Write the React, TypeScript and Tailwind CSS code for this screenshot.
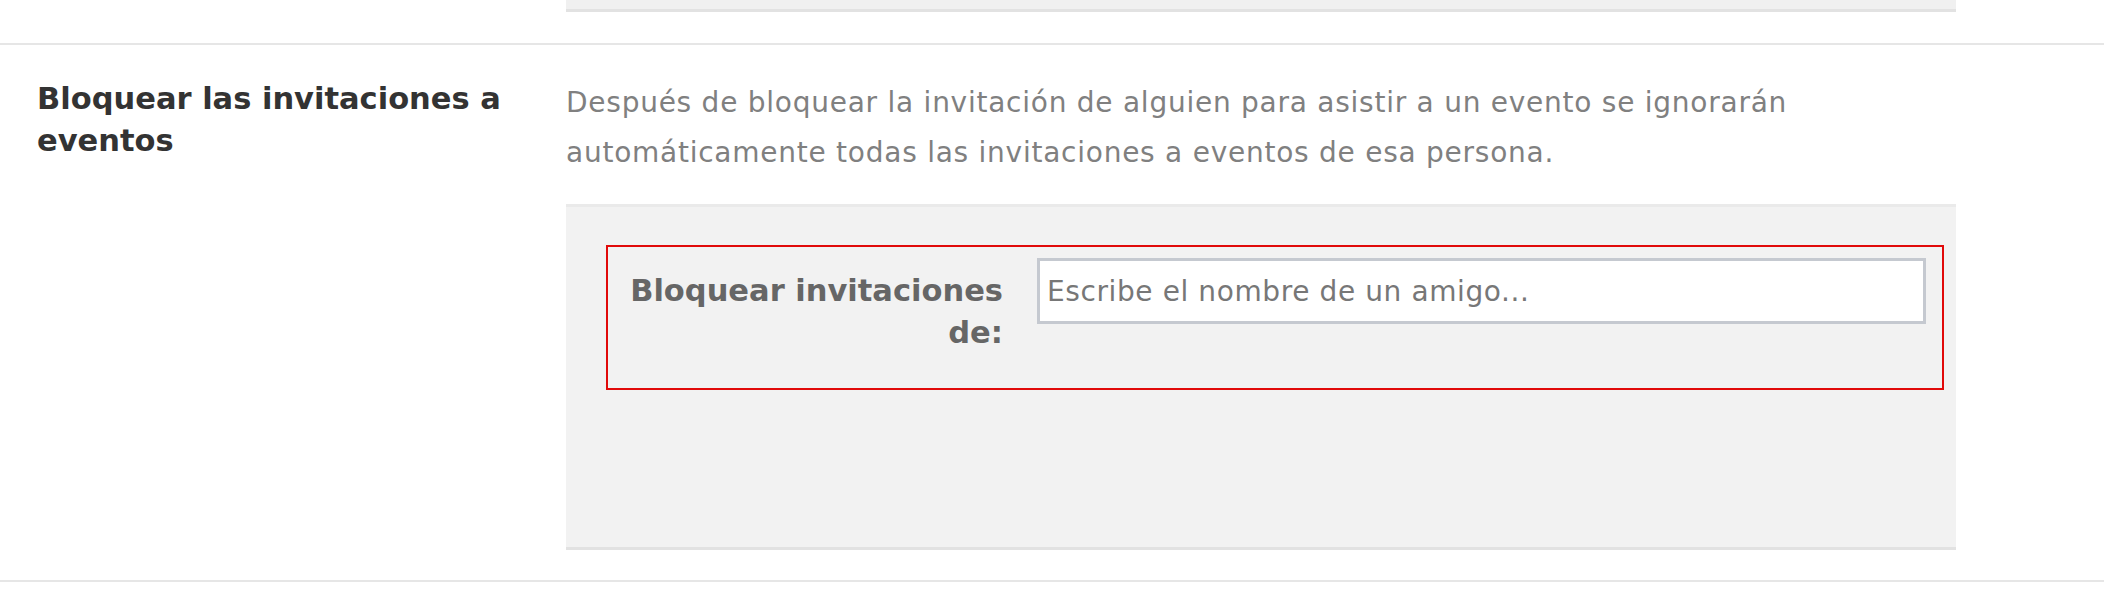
export default function App() {
  return (
    <div className="w-[2104px] h-[604px] bg-white overflow-hidden font-['DejaVu_Sans',sans-serif]">
      {/* bottom of previous section's box */}
      <div className="ml-[566px] w-[1390px] h-[12px] bg-[#f0f0f0] border-b-[3px] border-[#e2e2e2]" />

      <div className="mt-[31px] border-t-2 border-[#e6e6e6]">
        <div className="flex items-start pt-[33px]">
          <div className="w-[566px] shrink-0 pl-[37px] pr-[40px] text-[30.5px] leading-[42px] font-bold text-[#333]">
            Bloquear las invitaciones a eventos
          </div>

          <div className="w-[1390px]">
            <p className="text-[28px] leading-[50px] tracking-[0.75px] text-[#808080] pr-[100px]">
              Después de bloquear la invitación de alguien para asistir a un evento se ignorarán automáticamente todas las invitaciones a eventos de esa persona.
            </p>

            <div className="mt-[26px] h-[346px] bg-[#f2f2f2] border-t-[3px] border-b-[3px] border-t-[#eaeaea] border-b-[#e2e2e2] pt-[38px] pl-[40px] pr-[12px]">
              <div className="h-[145px] border-2 border-[#e10a0a] flex items-start pt-[11px] pr-[16px]">
                <label className="w-[395px] shrink-0 text-right pt-[12px] text-[30.5px] leading-[42px] font-bold text-[#666]">
                  Bloquear invitaciones de:
                </label>
                <input
                  type="text"
                  placeholder="Escribe el nombre de un amigo..."
                  className="ml-[34px] flex-1 h-[66px] bg-white border-[3px] border-[#c5c9d0] pl-[7px] text-[28px] tracking-[0.6px] text-[#333] placeholder:text-[#777] outline-none"
                />
              </div>
            </div>
          </div>
        </div>

        <div className="mt-[30px] border-t-2 border-[#e6e6e6]" />
      </div>
    </div>
  );
}
